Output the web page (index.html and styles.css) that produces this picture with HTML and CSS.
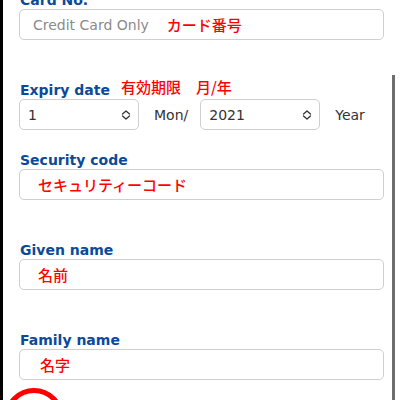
FILE: index.html
```html
<!DOCTYPE html>
<html lang="ja">
<head>
<meta charset="utf-8">
<link rel="stylesheet" href="styles.css">
<title>Card form</title>
</head>
<body>
<div class="page">
  <form class="form">
    <div class="field">
      <label class="label">Card No.</label>
      <div class="input"><span class="placeholder">Credit Card Only</span><span class="note note-card">カード番号</span></div>
    </div>

    <div class="field field-expiry">
      <div class="label">Expiry date<span class="note note-label">有効期限　月/年</span></div>
      <div class="expiry-row">
        <div class="select">
          <span class="value">1</span>
          <svg class="chev" width="10" height="10" viewBox="0 0 10 10"><path d="M1.5 4 L5 1 L8.5 4 M1.5 6 L5 9 L8.5 6" fill="none" stroke="#333" stroke-width="1.3" stroke-linecap="round" stroke-linejoin="round"/></svg>
        </div>
        <span class="unit unit-mon">Mon/</span>
        <div class="select">
          <span class="value">2021</span>
          <svg class="chev" width="10" height="10" viewBox="0 0 10 10"><path d="M1.5 4 L5 1 L8.5 4 M1.5 6 L5 9 L8.5 6" fill="none" stroke="#333" stroke-width="1.3" stroke-linecap="round" stroke-linejoin="round"/></svg>
        </div>
        <span class="unit unit-year">Year</span>
      </div>
    </div>

    <div class="field">
      <label class="label">Security code</label>
      <div class="input"><span class="note note-in">セキュリティーコード</span></div>
    </div>

    <div class="field">
      <label class="label">Given name</label>
      <div class="input"><span class="note note-in">名前</span></div>
    </div>

    <div class="field">
      <label class="label">Family name</label>
      <div class="input"><span class="note note-in note-family">名字</span></div>
    </div>
  </form>
  <div class="scrollbar"></div>
  <div class="circle"></div>
</div>
</body>
</html>
```

FILE: styles.css
```css
html, body {
  margin: 0;
  padding: 0;
  background: #fff;
  overflow: hidden;
}

.page {
  position: relative;
  width: 400px;
  height: 400px;
  box-sizing: border-box;
  border-left: 3px solid #000;
  background: #fff;
  overflow: hidden;
  font-family: "DejaVu Sans", Verdana, sans-serif;
  color: #333;
}

.form {
  display: flex;
  flex-direction: column;
  gap: 42px;
  margin-top: -8px;
  padding-left: 16px;
  width: 365px;
}

.field {
  display: flex;
  flex-direction: column;
}

.field-expiry {
  margin-bottom: -20px;
}

.label {
  display: block;
  font-size: 14px;
  font-weight: bold;
  line-height: 17px;
  height: 17px;
  color: #0b4a9a;
  padding-left: 1px;
  white-space: nowrap;
}

.input {
  display: flex;
  align-items: center;
  height: 31px;
  box-sizing: border-box;
  border: 1px solid #cfcfcf;
  border-radius: 5px;
  padding-left: 13px;
  background: #fff;
}

.placeholder {
  font-size: 14px;
  color: #8a8a8a;
}

.note {
  font-family: "Noto Sans CJK JP", sans-serif;
  color: #ff0000;
  font-size: 15px;
  font-weight: 500;
}

.note-card {
  margin-left: 18px;
}

.note-label {
  margin-left: 11px;
  font-size: 15px;
  line-height: 10px;
  vertical-align: 2px;
}

.note-in {
  margin-left: 5px;
}

.note-family {
  margin-left: 7px;
}

.expiry-row {
  display: flex;
  align-items: center;
  height: 31px;
}

.select {
  display: flex;
  align-items: center;
  justify-content: space-between;
  width: 120px;
  height: 31px;
  box-sizing: border-box;
  border: 1px solid #cfcfcf;
  border-radius: 5px;
  padding: 0 7px 0 8px;
  font-size: 14px;
  color: #333;
}

.chev {
  display: block;
}

.unit {
  font-size: 14px;
  color: #333;
}

.unit-mon {
  margin: 0 12px 0 15px;
}

.unit-year {
  margin-left: 15px;
}

.scrollbar {
  position: absolute;
  left: 389px;
  top: 75px;
  width: 3px;
  height: 330px;
  background: #6e6e6e;
}

.circle {
  position: absolute;
  left: 1px;
  top: 388px;
  width: 60px;
  height: 60px;
  box-sizing: border-box;
  border: 5px solid #ff0000;
  border-radius: 50%;
}
```
